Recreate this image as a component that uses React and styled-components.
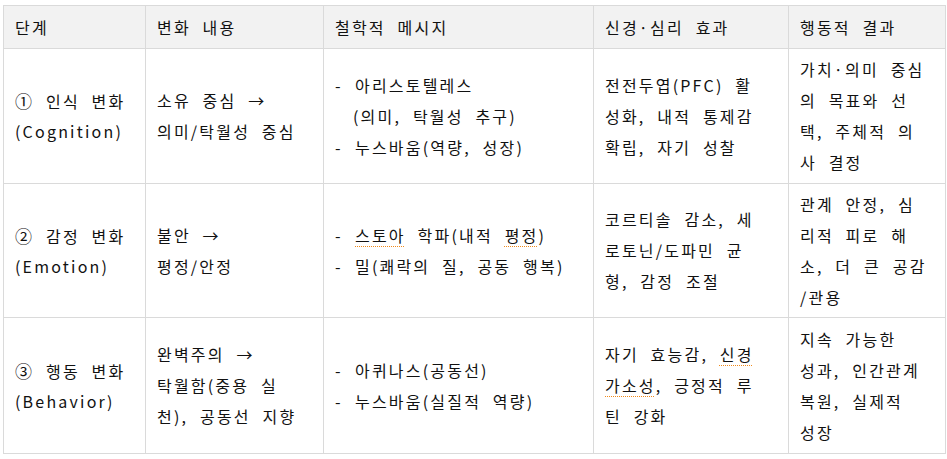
import React from 'react';
import styled, { createGlobalStyle } from 'styled-components';

const GlobalStyle = createGlobalStyle`
  html, body {
    margin: 0;
    padding: 0;
    background: #ffffff;
  }

  body {
    font-family: "Noto Sans CJK KR", "Noto Sans", sans-serif;
    color: #111111;
  }
`;

const Page = styled.div`
  padding: 5px 2px 0 3px;
`;

const Table = styled.table`
  width: 942px;
  table-layout: fixed;
  border-collapse: collapse;
  font-size: 16px;
  line-height: 31px;
  letter-spacing: 2.2px;
  word-spacing: 6px;
`;

const HeadCell = styled.th`
  height: 42px;
  padding: 0 11px;
  border: 1px solid #dadada;
  background: #f2f2f2;
  font-weight: 400;
  text-align: left;
  vertical-align: middle;
  white-space: nowrap;
`;

const Cell = styled.td`
  height: ${(p) => p.$h}px;
  padding: 0 11px;
  border: 1px solid #dadada;
  vertical-align: middle;
  white-space: nowrap;
`;

const Line = styled.div`
  height: 31px;
`;

const Item = styled.div`
  display: flex;
  height: 31px;
`;

const Dash = styled.span`
  width: 20px;
  flex: none;
`;

const Indent = styled.div`
  height: 31px;
  padding-left: 18px;
`;

const Squiggle = styled.span`
  text-decoration: underline dotted #f08a1c;
  text-decoration-thickness: 1px;
  text-underline-offset: 4px;
`;

const Mark = styled.span`
  font-size: 17px;
`;

const columns = [142, 178, 270, 195, 157];
const headers = ['단계', '변화 내용', '철학적 메시지', '신경·심리 효과', '행동적 결과'];

const Lines = ({ items }) => items.map((t, i) => <Line key={i}>{t}</Line>);

const rows = [
  {
    h: 134,
    stage: [<><Mark>①</Mark> 인식 변화</>, '(Cognition)'],
    change: ['소유 중심 →', '의미/탁월성 중심'],
    philosophy: (
      <>
        <Item><Dash>-</Dash>아리스토텔레스</Item>
        <Indent>(의미, 탁월성 추구)</Indent>
        <Item><Dash>-</Dash>누스바움(역량, 성장)</Item>
      </>
    ),
    neuro: ['전전두엽(PFC) 활', '성화, 내적 통제감', '확립, 자기 성찰'],
    result: ['가치·의미 중심', '의 목표와 선', '택, 주체적 의', '사 결정'],
  },
  {
    h: 133,
    stage: [<><Mark>②</Mark> 감정 변화</>, '(Emotion)'],
    change: ['불안 →', '평정/안정'],
    philosophy: (
      <>
        <Item><Dash>-</Dash><span><Squiggle>스토아</Squiggle> 학파(내적 <Squiggle>평정</Squiggle>)</span></Item>
        <Item><Dash>-</Dash>밀(쾌락의 질, 공동 행복)</Item>
      </>
    ),
    neuro: ['코르티솔 감소, 세', '로토닌/도파민 균', '형, 감정 조절'],
    result: ['관계 안정, 심', '리적 피로 해', '소, 더 큰 공감', '/관용'],
  },
  {
    h: 135,
    stage: [<><Mark>③</Mark> 행동 변화</>, '(Behavior)'],
    change: ['완벽주의 →', '탁월함(중용 실', '천), 공동선 지향'],
    philosophy: (
      <>
        <Item><Dash>-</Dash>아퀴나스(공동선)</Item>
        <Item><Dash>-</Dash>누스바움(실질적 역량)</Item>
      </>
    ),
    neuro: [
      <>자기 효능감, <Squiggle>신경</Squiggle></>,
      <><Squiggle>가소성</Squiggle>, 긍정적 루</>,
      '틴 강화',
    ],
    result: ['지속 가능한', '성과, 인간관계', '복원, 실제적', '성장'],
  },
];

export default function App() {
  return (
    <Page>
      <GlobalStyle />
      <Table>
        <colgroup>
          {columns.map((w, i) => <col key={i} style={{ width: w }} />)}
        </colgroup>
        <thead>
          <tr>
            {headers.map((h) => <HeadCell key={h}>{h}</HeadCell>)}
          </tr>
        </thead>
        <tbody>
          {rows.map((r, i) => (
            <tr key={i}>
              <Cell $h={r.h}><Lines items={r.stage} /></Cell>
              <Cell $h={r.h}><Lines items={r.change} /></Cell>
              <Cell $h={r.h}>{r.philosophy}</Cell>
              <Cell $h={r.h}><Lines items={r.neuro} /></Cell>
              <Cell $h={r.h}><Lines items={r.result} /></Cell>
            </tr>
          ))}
        </tbody>
      </Table>
    </Page>
  );
}
